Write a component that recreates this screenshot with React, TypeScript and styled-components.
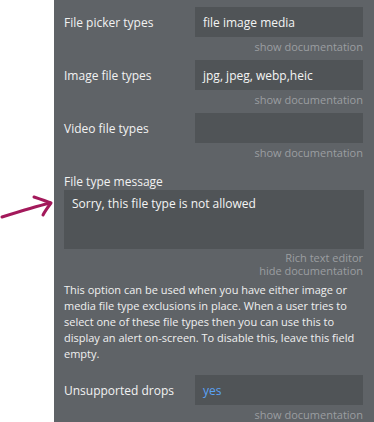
import React from "react";
import styled, { createGlobalStyle } from "styled-components";

const Global = createGlobalStyle`
  html, body { margin: 0; padding: 0; background: #ffffff; }
  body { font-family: "Open Sans", "Noto Sans", sans-serif; }
`;

const Page = styled.div`
  display: flex;
  width: 374px;
  height: 422px;
  overflow: hidden;
`;

const Gutter = styled.div`
  position: relative;
  width: 54px;
  flex: none;
  background: #ffffff;
`;

const ArrowSvg = styled.svg`
  position: absolute;
  left: 0;
  top: 190px;
`;

const Panel = styled.div`
  flex: 1;
  background: #5f6367;
  padding: 7px 11px 0 10px;
  display: flex;
  flex-direction: column;
  color: #f2f2f2;
  font-size: 12px;
`;

const Row = styled.div`
  flex: none;
  display: flex;
  align-items: center;
  height: 30px;
`;

const Label = styled.div`
  width: 131px;
  flex: none;
  white-space: nowrap;
`;

const Field = styled.div<{ $accent?: boolean }>`
  flex: 1;
  height: 30px;
  background: #505457;
  display: flex;
  align-items: center;
  padding: 0 8px;
  color: ${(p) => (p.$accent ? "#5aa2f5" : "#f4f4f4")};
  white-space: nowrap;
`;

const DocLink = styled.div<{ $gap?: number }>`
  flex: none;
  text-align: right;
  font-size: 11px;
  color: #9b9ea1;
  line-height: 13px;
  margin-top: 3px;
  margin-bottom: ${(p) => p.$gap ?? 7}px;
`;

const DocStack = styled.div`
  flex: none;
  display: flex;
  flex-direction: column;
  margin-top: 3px;
  text-align: right;
  font-size: 11px;
  color: #9b9ea1;
  line-height: 12.5px;
  height: 26px;
`;

const StackLabel = styled.div`
  flex: none;
  line-height: 16px;
`;

const TextArea = styled.div`
  flex: none;
  height: 59px;
  background: #505457;
  padding: 6px 8px;
  box-sizing: border-box;
  margin-right: -1px;
  line-height: 16px;
  color: #f4f4f4;
`;

const Help = styled.p`
  flex: none;
  margin: 4px 0 13px 0;
  font-size: 11px;
  line-height: 16px;
  color: #f0f0f0;
`;

function Arrow() {
  return (
    <ArrowSvg width="54" height="40" viewBox="0 0 54 40">
      <g
        fill="none"
        stroke="#a3195b"
        strokeWidth="3"
        strokeLinecap="round"
        strokeLinejoin="round"
      >
        <path d="M2 27 C18 22 34 17 50 13" />
        <path d="M34 7 C40 9 46 11 51 13 C48 17 45 21 43 25" />
      </g>
    </ArrowSvg>
  );
}

export default function App() {
  return (
    <>
      <Global />
      <Page>
        <Gutter>
          <Arrow />
        </Gutter>
        <Panel>
          <Row>
            <Label>File picker types</Label>
            <Field>file image media</Field>
          </Row>
          <DocLink>show documentation</DocLink>
          <Row>
            <Label>Image file types</Label>
            <Field>jpg, jpeg, webp,heic</Field>
          </Row>
          <DocLink>show documentation</DocLink>
          <Row>
            <Label>Video file types</Label>
            <Field />
          </Row>
          <DocLink $gap={15}>show documentation</DocLink>
          <StackLabel>File type message</StackLabel>
          <TextArea>Sorry, this file type is not allowed</TextArea>
          <DocStack>
            <span>Rich text editor</span>
            <span>hide documentation</span>
          </DocStack>
          <Help>
            This option can be used when you have either image or media file
            type exclusions in place. When a user tries to select one of these
            file types then you can use this to display an alert on-screen. To
            disable this, leave this field empty.
          </Help>
          <Row>
            <Label>Unsupported drops</Label>
            <Field $accent>yes</Field>
          </Row>
          <DocLink>show documentation</DocLink>
        </Panel>
      </Page>
    </>
  );
}
